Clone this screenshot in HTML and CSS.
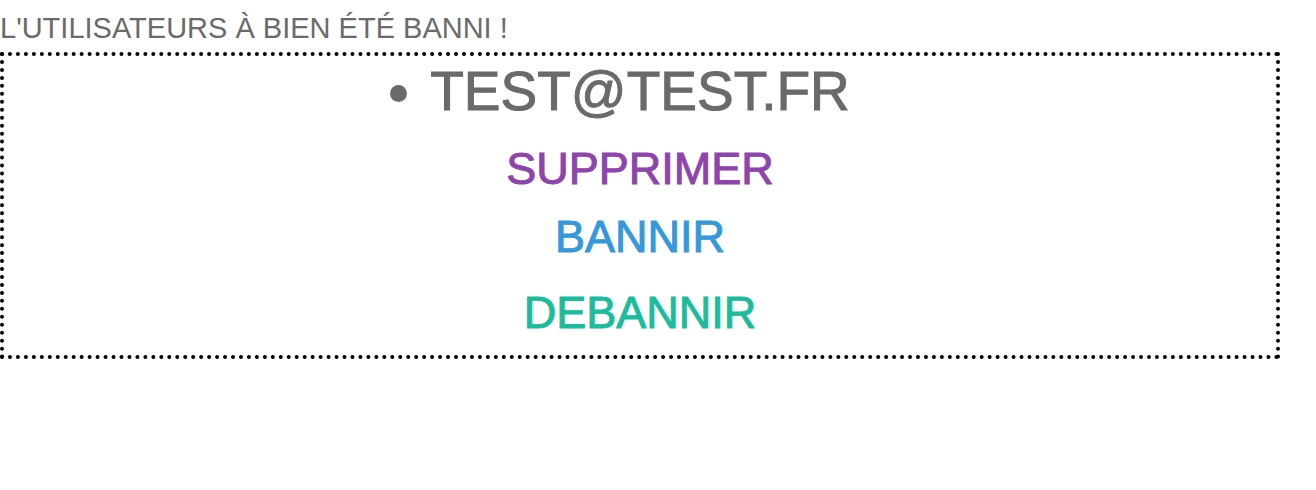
FILE: index.html
```html
<!DOCTYPE html>
<html lang="fr">
<head>
<meta charset="utf-8">
<title>Utilisateurs</title>
<link rel="stylesheet" href="styles.css">
</head>
<body>
<p class="notice">L'utilisateurs à bien été banni !</p>
<section class="user">
<ul class="user-list">
<li class="user-email">test@test.fr</li>
</ul>
<a class="action action-delete" href="#">Supprimer</a>
<a class="action action-ban" href="#">Bannir</a>
<a class="action action-unban" href="#">Debannir</a>
</section>
</body>
</html>
```

FILE: styles.css
```css
body {
  margin: 0;
  background: #fff;
  color: #6a6a6a;
  font-family: "Liberation Sans", Arial, sans-serif;
  text-transform: uppercase;
}

.notice {
  margin: 0;
  padding-top: 8px;
  font-size: 29px;
  line-height: 40px;
}

.user {
  display: flex;
  flex-direction: column;
  align-items: center;
  margin: 4px 36px 0 0;
  padding-bottom: 8px;
  border: 4px dotted #000;
  -webkit-text-stroke: 1px currentColor;
}

.user-list {
  margin: 0 0 8px;
  padding: 0;
}

.user-email {
  font-size: 55px;
  line-height: 71px;
}

.action {
  font-size: 45px;
  line-height: 68px;
  text-decoration: none;
}

.action-delete {
  color: #8e44ad;
}

.action-ban {
  color: #3498db;
}

.action-unban {
  margin-top: 8px;
  color: #1abc9c;
}
```
